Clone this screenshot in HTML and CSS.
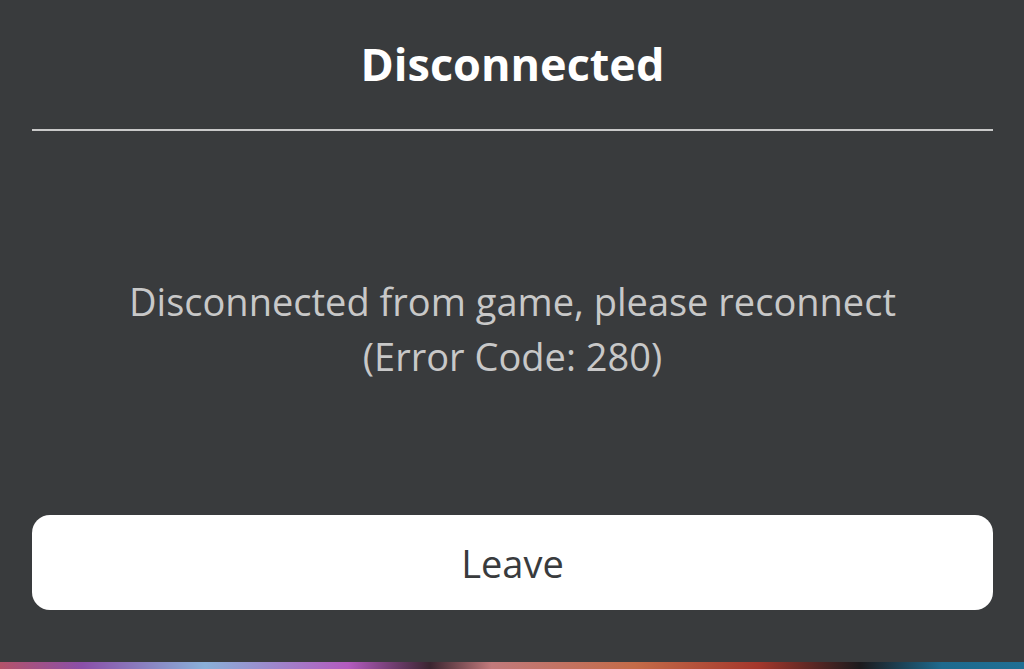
FILE: index.html
```html
<!DOCTYPE html>
<html lang="en">

<head>
	<meta charset="UTF-8">
	<meta name="viewport" content="width=device-width, initial-scale=1.0">
	<title>Disconnected</title>
	<link rel="stylesheet" href="styles.css">
</head>

<body>
	<div class="prompt">
		<h1 class="prompt-title">Disconnected</h1>
		<hr class="prompt-divider">
		<p class="prompt-message">Disconnected from game, please reconnect<br>(Error Code: 280)</p>
		<button class="prompt-button" type="button">Leave</button>
	</div>
	<div class="game-strip"></div>
</body>

</html>
```

FILE: styles.css
```css
html,
body {
	margin: 0;
	height: 100%;
}

body {
	font-family: 'Open Sans', sans-serif;
	background-color: #393b3d;
	display: flex;
	flex-direction: column;
	overflow: hidden;
}

.prompt {
	flex: 1;
	display: flex;
	flex-direction: column;
	padding: 0 31px 0 32px;
}

.prompt-title {
	margin: 0;
	padding-top: 36px;
	height: 56px;
	text-align: center;
	font-size: 45px;
	font-weight: 700;
	line-height: 56px;
	color: #ffffff;
}

.prompt-divider {
	margin: 37px 0 0 0;
	border: none;
	height: 2px;
	background-color: #c9c9c9;
}

.prompt-message {
	margin: 143px 0 0 0;
	text-align: center;
	font-size: 38px;
	line-height: 55px;
	color: #c8c8c8;
}

.prompt-button {
	margin-top: 131px;
	height: 95px;
	border: none;
	border-radius: 18px;
	background-color: #ffffff;
	color: #393b3d;
	font-family: inherit;
	font-size: 38px;
	cursor: pointer;
}

.game-strip {
	height: 7px;
	background: linear-gradient(90deg, #b4536a 0%, #8a4fa8 8%, #8ab0d8 20%, #b35bbf 34%, #3a2530 42%, #c27a7c 48%, #c46b48 62%, #a4372c 74%, #1c1a1d 84%, #1e6a8e 92%, #206f94 100%);
}
```
